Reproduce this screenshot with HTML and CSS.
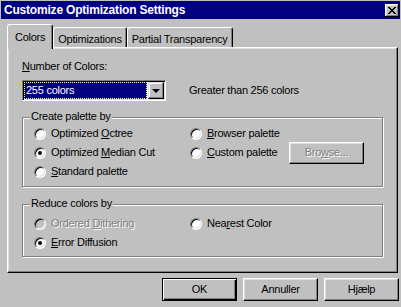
FILE: index.html
```html
<!DOCTYPE html>
<html lang="en">
<head>
<meta charset="UTF-8">
<title>Customize Optimization Settings</title>
<link rel="stylesheet" href="styles.css">
</head>
<body>
  <div class="titlebar">
    <span class="title">Customize Optimization Settings</span>
    <span class="close">
      <svg width="8" height="7" viewBox="0 0 8 7"><path d="M0 0h2v1h1v1h2v-1h1v-1h2v1h-1v1h-1v1h-1v1h1v1h1v1h1v1h-2v-1h-1v-1h-2v1h-1v1h-2v-1h1v-1h1v-1h1v-1h-1v-1h-1v-1h-1z" fill="#000"/></svg>
    </span>
  </div>

  <div class="tabs">
    <div class="tab active">Colors</div>
    <div class="tab">Optimizations</div>
    <div class="tab">Partial Transparency</div>
  </div>

  <div class="panel">
    <div class="label"><u>N</u>umber of Colors:</div>
    <div class="combo-row">
      <div class="combo">
        <div class="combo-value"><span class="focus">255 colors</span></div>
        <div class="combo-btn"><span class="arrow"></span></div>
      </div>
      <span class="hint">Greater than 256 colors</span>
    </div>

    <div class="group group-palette">
      <span class="legend">Create palette by</span>
      <div class="rows">
        <label class="opt"><span class="radio"></span><span>Optimized <u>O</u>ctree</span></label>
        <label class="opt"><span class="radio"></span><span><u>B</u>rowser palette</span></label>
        <label class="opt"><span class="radio checked"></span><span>Optimized <u>M</u>edian Cut</span></label>
        <div class="opt-row">
          <label class="opt opt-fixed"><span class="radio"></span><span><u>C</u>ustom palette</span></label>
          <button class="btn disabled">Bro<u>w</u>se...</button>
        </div>
        <label class="opt"><span class="radio"></span><span><u>S</u>tandard palette</span></label>
      </div>
    </div>

    <div class="group group-reduce">
      <span class="legend">Reduce colors by</span>
      <div class="rows">
        <label class="opt disabled"><span class="radio off"></span><span>Ordered <u>D</u>ithering</span></label>
        <label class="opt"><span class="radio"></span><span>Nea<u>r</u>est Color</span></label>
        <label class="opt"><span class="radio checked"></span><span><u>E</u>rror Diffusion</span></label>
      </div>
    </div>
  </div>

  <div class="buttons">
    <button class="btn default">OK</button>
    <button class="btn">Annuller</button>
    <button class="btn">Hjælp</button>
  </div>
</body>
</html>
```

FILE: styles.css
```css
body {
  margin: 0;
  width: 401px;
  height: 307px;
  overflow: hidden;
  background: #c0c0c0;
  font-family: "Liberation Sans", Arial, sans-serif;
  font-size: 11px;
  line-height: 13px;
  letter-spacing: -0.25px;
  color: #000;
}

.titlebar {
  display: flex;
  align-items: center;
  height: 18px;
  margin: 1px 1px 0;
  padding: 0 1px 0 3px;
  background: #000080;
  color: #fff;
}

.title {
  flex: 1;
  font-size: 12px;
  font-weight: bold;
  letter-spacing: -0.2px;
}

.close {
  display: flex;
  align-items: center;
  justify-content: center;
  width: 14px;
  height: 13px;
  box-sizing: border-box;
  background: #c0c0c0;
  box-shadow: inset -1px -1px #000, inset 1px 1px #fff, inset -2px -2px #808080, inset 2px 2px #dfdfdf;
}

/* tabs */
.tabs {
  position: relative;
  z-index: 1;
  display: flex;
  align-items: flex-end;
  height: 25px;
  margin: 5px 0 -2px 7px;
}

.tab {
  height: 20px;
  box-sizing: border-box;
  margin-bottom: 2px;
  padding: 5px 4px 0;
  border: 1px solid;
  border-color: #fff #000 transparent #fff;
  border-bottom: none;
  border-radius: 3px 3px 0 0;
  box-shadow: inset -1px 0 #808080;
}

.tab.active {
  height: 25px;
  margin-bottom: 0;
  padding: 6px 7px 0;
  background: #c0c0c0;
}

/* panel */
.panel {
  width: 391px;
  height: 226px;
  box-sizing: border-box;
  margin-left: 7px;
  padding: 12px 0 0 14px;
  border: 1px solid;
  border-color: #fff #000 #000 #fff;
  box-shadow: inset -1px -1px #808080, inset 1px 1px #dfdfdf;
}

.label {
  margin-bottom: 7px;
}

.combo-row {
  display: flex;
  align-items: center;
}

.combo {
  display: flex;
  width: 144px;
  height: 21px;
  box-sizing: border-box;
  padding: 1px;
  background: #fff;
  border: 1px solid;
  border-color: #808080 #fff #fff #808080;
  box-shadow: inset 1px 1px #000, inset -1px -1px #dfdfdf;
}

.combo-value {
  flex: 1;
  display: flex;
  margin-right: 1px;
  background: #000080;
  color: #fff;
}

.focus {
  flex: 1;
  padding: 2px 2px 0;
  outline: 1px dotted #ffff80;
  outline-offset: -1px;
}

.combo-btn {
  display: flex;
  align-items: center;
  justify-content: center;
  width: 16px;
  box-sizing: border-box;
  background: #c0c0c0;
  border: 1px solid;
  border-color: #dfdfdf #000 #000 #dfdfdf;
  box-shadow: inset -1px -1px #808080, inset 1px 1px #fff;
}

.arrow {
  width: 0;
  height: 0;
  border-left: 4px solid transparent;
  border-right: 4px solid transparent;
  border-top: 4px solid #000;
}

.hint {
  margin-left: 23px;
}

/* group boxes */
.group {
  position: relative;
  width: 361px;
  box-sizing: border-box;
  border: 1px solid #808080;
  box-shadow: inset 1px 1px #fff, 1px 1px #fff;
}

.group-palette {
  height: 70px;
  margin-top: 16px;
  padding: 6px 0 0 11px;
}

.group-reduce {
  height: 53px;
  margin-top: 17px;
  padding: 9px 0 0 11px;
}

.legend {
  position: absolute;
  top: -8px;
  left: 7px;
  padding: 0 1px;
  background: #c0c0c0;
}

.rows {
  display: grid;
  grid-template-columns: 156px 1fr;
  grid-auto-rows: 19px;
  align-items: center;
}

.opt {
  display: flex;
  align-items: center;
  gap: 5px;
}

.opt-row {
  display: flex;
  align-items: center;
}

.opt-fixed {
  width: 99px;
}

.radio {
  position: relative;
  flex: none;
  width: 12px;
  height: 12px;
  box-sizing: border-box;
  border-radius: 50%;
  background: #fff;
  border: 1px solid;
  border-color: #808080 #fff #fff #808080;
  box-shadow: inset 1px 1px #000, inset -1px -1px #dfdfdf;
}

.radio.off {
  background: #c0c0c0;
}

.radio.checked::after {
  content: "";
  position: absolute;
  left: 3px;
  top: 3px;
  width: 4px;
  height: 4px;
  border-radius: 50%;
  background: #000;
}

.disabled {
  color: #808080;
  text-shadow: 1px 1px #fff;
}

/* push buttons */
.btn {
  width: 75px;
  height: 22px;
  box-sizing: border-box;
  padding: 0;
  background: #c0c0c0;
  border: 1px solid;
  border-color: #fff #000 #000 #fff;
  box-shadow: inset -1px -1px #808080, inset 1px 1px #dfdfdf;
  font: inherit;
  letter-spacing: inherit;
  color: #000;
}

.btn.disabled {
  color: #808080;
}

.btn.default {
  border-color: #000;
  box-shadow: inset 1px 1px #fff, inset -1px -1px #000, inset -2px -2px #808080;
}

.buttons {
  display: flex;
  justify-content: flex-end;
  gap: 6px;
  margin-top: 5px;
  padding-right: 2px;
}

.buttons .btn {
  height: 23px;
}
```
